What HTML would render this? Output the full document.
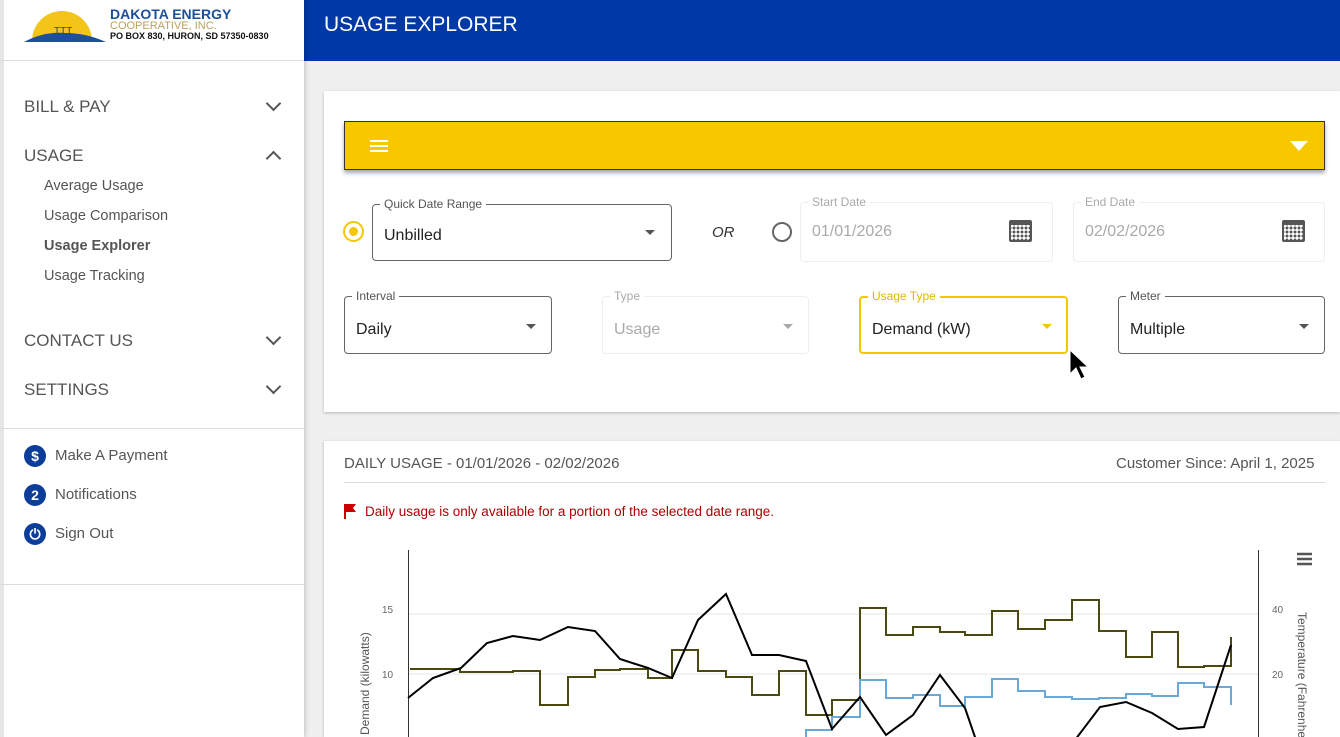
<!DOCTYPE html>
<html><head><style>
*{box-sizing:border-box;margin:0;padding:0}
body{width:1340px;height:737px;overflow:hidden;background:#f0f0f0;font-family:"Liberation Sans",sans-serif;position:relative}
.a{position:absolute}
.side{left:0;top:0;width:304px;height:737px;background:#fff;border-left:4px solid #e6e6e6;box-shadow:2px 0 4px rgba(0,0,0,.15)}
.nav{font-size:17px;color:#555;left:20px}
.sub{font-size:14.5px;color:#555;left:40px}
.chev{left:264px;width:11px;height:11px;border-right:2px solid #555;border-bottom:2px solid #555}
.fld{border:1px solid #666;border-radius:4px;background:#fff}
.lbl{font-size:12px;color:#555;background:#fff;padding:0 4px}
.val{font-size:16px;color:#222}
.tri{width:0;height:0;border-left:5px solid transparent;border-right:5px solid transparent;border-top:5px solid #555}
.ic{width:22px;height:22px;border-radius:50%;background:#0d3d9a;color:#fff;font-weight:bold;font-size:14px;text-align:center;line-height:22px;left:20px}
.cal{width:23px;height:22px;border:2px solid #555;border-top-width:5px;border-radius:2px;background:radial-gradient(circle,#555 1.3px,transparent 1.6px) 1px 1px/4px 4px #fff}
</style></head><body>
<div class="a" style="left:304px;top:0;width:1036px;height:61px;background:#0039a6"></div>
<div class="a" style="left:324px;top:13px;color:#fff;font-size:21px">USAGE EXPLORER</div>
<div class="a side">
 <svg class="a" style="left:20px;top:5px" width="85" height="38"><path d="M8 36 A30 30 0 0 1 68 36Z" fill="#f3c51b"/><path d="M0 37 Q20 26 42 28 Q62 28 82 37Z" fill="#1d4f9a"/><text x="30" y="29" font-size="10" fill="#444">TTT</text></svg>
 <div class="a" style="left:106px;top:6px;color:#1d4f9a;font-weight:bold;font-size:14px">DAKOTA ENERGY</div>
 <div class="a" style="left:106px;top:20px;color:#b9a25a;font-size:11px">COOPERATIVE, INC.</div>
 <div class="a" style="left:106px;top:31px;color:#111;font-size:9px;font-weight:bold">PO BOX 830, HURON, SD 57350-0830</div>
 <div class="a" style="left:-4px;top:60px;width:304px;height:1px;background:#ddd"></div>
 <div class="a nav" style="top:97px">BILL &amp; PAY</div><div class="a chev" style="top:98px;transform:rotate(45deg)"></div>
 <div class="a nav" style="top:146px">USAGE</div><div class="a chev" style="top:153px;transform:rotate(-135deg)"></div>
 <div class="a sub" style="top:178px">Average Usage</div>
 <div class="a sub" style="top:208px">Usage Comparison</div>
 <div class="a sub" style="top:238px;font-weight:bold">Usage Explorer</div>
 <div class="a sub" style="top:268px">Usage Tracking</div>
 <div class="a nav" style="top:331px">CONTACT US</div><div class="a chev" style="top:332px;transform:rotate(45deg)"></div>
 <div class="a nav" style="top:380px">SETTINGS</div><div class="a chev" style="top:381px;transform:rotate(45deg)"></div>
 <div class="a" style="left:-4px;top:428px;width:304px;height:1px;background:#ddd"></div>
 <div class="a ic" style="top:445px">$</div><div class="a sub" style="left:51px;top:447px;font-size:15px">Make A Payment</div>
 <div class="a ic" style="top:484px">2</div><div class="a sub" style="left:51px;top:486px;font-size:15px">Notifications</div>
 <div class="a ic" style="top:523px">⏻</div><div class="a sub" style="left:51px;top:525px;font-size:15px">Sign Out</div>
 <div class="a" style="left:-4px;top:584px;width:304px;height:1px;background:#ddd"></div>
</div>
<div class="a" style="left:324px;top:91px;width:1016px;height:321px;background:#fff;box-shadow:0 1px 3px rgba(0,0,0,.25)"></div>
<div class="a" style="left:344px;top:121px;width:981px;height:49px;background:#f7c800;border:1px solid #333;box-shadow:0 3px 4px rgba(0,0,0,.35)"></div>
<div class="a" style="left:370px;top:140px;width:18px;height:12px;border-top:2px solid #fff;border-bottom:2px solid #fff"></div>
<div class="a" style="left:370px;top:145px;width:18px;height:2px;background:#fff"></div>
<div class="a" style="left:1290px;top:141px;border-left:9px solid transparent;border-right:9px solid transparent;border-top:10px solid #fff"></div>
<div class="a" style="left:343px;top:221px;width:21px;height:21px;border-radius:50%;border:2px solid #f3c800"></div>
<div class="a" style="left:349px;top:227px;width:9px;height:9px;border-radius:50%;background:#f3c800"></div>
<div class="a fld" style="left:372px;top:204px;width:300px;height:57px"></div>
<div class="a lbl" style="left:380px;top:197px">Quick Date Range</div>
<div class="a val" style="left:384px;top:227px">Unbilled</div><div class="a tri" style="left:645px;top:230px"></div>
<div class="a" style="left:712px;top:224px;font-style:italic;font-size:15px;color:#333">OR</div>
<div class="a" style="left:772px;top:222px;width:20px;height:20px;border-radius:50%;border:2px solid #666"></div>
<div class="a fld" style="left:800px;top:202px;width:253px;height:60px;border-color:#eee"></div>
<div class="a lbl" style="left:808px;top:195px;color:#aaa">Start Date</div>
<div class="a val" style="left:812px;top:223px;color:#aaa">01/01/2026</div>
<div class="a cal" style="left:1009px;top:220px"></div>
<div class="a fld" style="left:1073px;top:202px;width:252px;height:60px;border-color:#eee"></div>
<div class="a lbl" style="left:1081px;top:195px;color:#aaa">End Date</div>
<div class="a val" style="left:1085px;top:223px;color:#aaa">02/02/2026</div>
<div class="a cal" style="left:1282px;top:220px"></div>
<div class="a fld" style="left:344px;top:296px;width:208px;height:58px"></div>
<div class="a lbl" style="left:352px;top:289px">Interval</div>
<div class="a val" style="left:356px;top:321px">Daily</div><div class="a tri" style="left:526px;top:324px"></div>
<div class="a fld" style="left:602px;top:296px;width:207px;height:58px;border-color:#eee"></div>
<div class="a lbl" style="left:610px;top:289px;color:#aaa">Type</div>
<div class="a val" style="left:614px;top:321px;color:#aaa">Usage</div><div class="a tri" style="left:783px;top:324px;border-top-color:#aaa"></div>
<div class="a fld" style="left:859px;top:296px;width:209px;height:58px;border:2px solid #f3c800"></div>
<div class="a lbl" style="left:868px;top:289px;color:#e0b800">Usage Type</div>
<div class="a val" style="left:872px;top:321px">Demand (kW)</div><div class="a tri" style="left:1042px;top:324px;border-top-color:#f3c800"></div>
<div class="a fld" style="left:1118px;top:296px;width:207px;height:58px"></div>
<div class="a lbl" style="left:1126px;top:289px">Meter</div>
<div class="a val" style="left:1130px;top:321px">Multiple</div><div class="a tri" style="left:1299px;top:324px"></div>
<svg class="a" style="left:1068px;top:348px" width="22" height="34"><path d="M2 2 L2 26 L8 20 L13 31 L17 29 L12 19 L20 19Z" fill="#000" stroke="#fff" stroke-width="1"/></svg>
<div class="a" style="left:324px;top:441px;width:1016px;height:296px;background:#fff;box-shadow:0 1px 3px rgba(0,0,0,.25)"></div>
<div class="a" style="left:344px;top:455px;font-size:15px;color:#555">DAILY USAGE - 01/01/2026 - 02/02/2026</div>
<div class="a" style="left:1116px;top:455px;font-size:15px;color:#555">Customer Since: April 1, 2025</div>
<div class="a" style="left:344px;top:482px;width:981px;height:1px;background:#ddd"></div>
<svg class="a" style="left:343px;top:503px" width="14" height="16"><path d="M2 1V16" stroke="#c00" stroke-width="2"/><path d="M3 1H13L10 5L13 9H3Z" fill="#c00"/></svg>
<div class="a" style="left:365px;top:504px;font-size:13.5px;color:#b00000">Daily usage is only available for a portion of the selected date range.</div>
<svg class="a" style="left:330px;top:540px" width="1010" height="197">
<g transform="translate(-330,-540)">
<path d="M408 614H1258M408 674H1258" stroke="#e6e6e6"/>
<path d="M408.5 550V737M1258.5 550V737" stroke="#333"/>
<g font-size="10" fill="#666" font-family="Liberation Sans"><text x="382" y="613">15</text><text x="382" y="678">10</text><text x="1272" y="613">40</text><text x="1272" y="678">20</text></g>
<text transform="translate(369,735) rotate(-90)" font-size="12" fill="#555" font-family="Liberation Sans">Demand (kilowatts)</text>
<text transform="translate(1298,612) rotate(90)" font-size="12" fill="#555" font-family="Liberation Sans">Temperature (Fahrenheit)</text>
<path d="M1297 554h15M1297 559h15M1297 564h15" stroke="#555" stroke-width="2.5"/>
<path d="M410 669H460V672H513V671H540V705H568V677H595V670H620V669H648V678H672V650H698V671H726V677H752V695H779V671H806V715H832V700H860V608H886V635H913V627H940V632H965V635H992V611H1018V629H1045V620H1072V600H1099V631H1126V657H1152V632H1178V667H1204V666H1231V637" fill="none" stroke="#4a4a10" stroke-width="2"/>
<path d="M806 737V730H832V717H860V680H886V698H913V695H940V706H965V697H992V679H1018V691H1045V697H1072V699H1099V698H1126V694H1152V696H1178V683H1204V687H1231V705" fill="none" stroke="#6aa8d8" stroke-width="2"/>
<path d="M408 698L433 678L461 668L487 643L513 636L540 640L568 627L595 631L620 659L648 668L672 678L698 620L726 594L752 655L779 655L806 661L832 729L860 697L886 735L913 715L940 675L965 708L976 740M1075 740L1100 707L1126 702L1152 713L1178 729L1204 727L1231 645" fill="none" stroke="#000" stroke-width="2"/>
</g></svg>
</body></html>
